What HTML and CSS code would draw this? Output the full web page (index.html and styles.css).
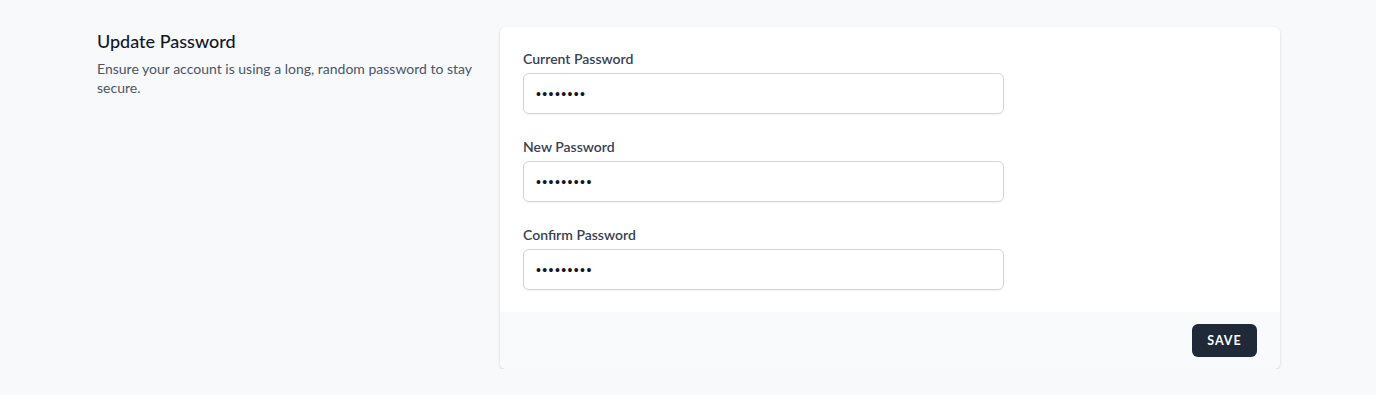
FILE: index.html
```html
<!DOCTYPE html>
<html lang="en">
<head>
<meta charset="utf-8">
<title>Update Password</title>
<link rel="stylesheet" href="styles.css">
</head>
<body>
<div class="page">
  <section class="section-grid">
    <div class="intro">
      <h3 class="intro-title">Update Password</h3>
      <p class="intro-desc">Ensure your account is using a long, random password to stay secure.</p>
    </div>
    <form class="card">
      <div class="card-body">
        <div class="field">
          <label class="label" for="current">Current Password</label>
          <input class="input" id="current" type="password" value="password">
        </div>
        <div class="field">
          <label class="label" for="new">New Password</label>
          <input class="input" id="new" type="password" value="password1">
        </div>
        <div class="field">
          <label class="label" for="confirm">Confirm Password</label>
          <input class="input" id="confirm" type="password" value="password1">
        </div>
      </div>
      <div class="card-footer">
        <button class="btn" type="button">Save</button>
      </div>
    </form>
  </section>
</div>
</body>
</html>
```
FILE: styles.css
```css
* { box-sizing: border-box; }
html, body { margin: 0; padding: 0; }
body {
  background: #f8f9fb;
  font-family: Lato, "Noto Sans", "Liberation Sans", sans-serif;
  color: #111827;
}
.page {
  padding: 27px 0 0 97px;
}
.section-grid {
  display: grid;
  grid-template-columns: 375px 780px;
  column-gap: 28px;
  align-items: start;
}
.intro-title {
  margin: 0;
  font-size: 18px;
  line-height: 28px;
  font-weight: 500;
  color: #111827;
}
.intro-desc {
  margin: 4px 0 0;
  font-size: 14px;
  line-height: 19px;
  color: #4b5563;
}
.card {
  margin: 0;
  background: #ffffff;
  border-radius: 6px;
  box-shadow: 0 1px 3px rgba(0,0,0,0.12), 0 1px 2px rgba(0,0,0,0.07);
  overflow: hidden;
}
.card-body {
  padding: 22px 23px 22px 23px;
  display: flex;
  flex-direction: column;
  gap: 23px;
}
.field {
  display: flex;
  flex-direction: column;
  width: 481px;
}
.label {
  font-size: 14px;
  line-height: 20px;
  font-weight: 600;
  color: #374151;
}
.input {
  margin-top: 4px;
  height: 41px;
  width: 100%;
  border: 1px solid #d1d5db;
  border-radius: 6px;
  box-shadow: 0 1px 2px rgba(0,0,0,0.05);
  padding: 0 12px;
  font-family: "Liberation Sans", sans-serif;
  font-size: 14px;
  color: #111827;
  background: #fff;
  letter-spacing: 1.4px;
}
.card-footer {
  background: #f9fafb;
  padding: 12px 23px;
  display: flex;
  justify-content: flex-end;
}
.btn {
  height: 33px;
  width: 65px;
  border: 0;
  border-radius: 6px;
  background: #1f2937;
  color: #fff;
  font-family: Lato, "Noto Sans", sans-serif;
  font-size: 12.5px;
  font-weight: 700;
  letter-spacing: 1px;
  text-transform: uppercase;
  padding: 0;
}
```
